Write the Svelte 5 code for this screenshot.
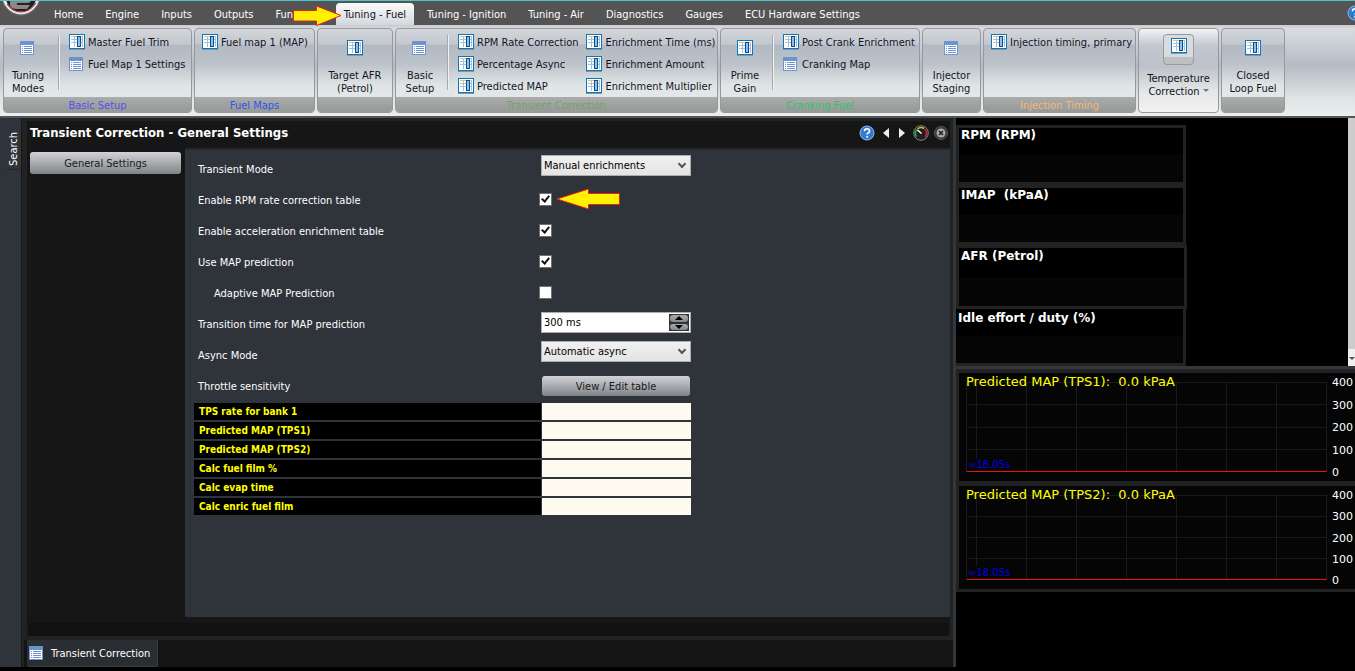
<script lang="ts">
  type Item = { label: string; icon: 'table' | 'list' };
  type Group = {
    title?: string;
    color?: string;
    width: number;
    big?: Item;
    items?: Item[][];
    menu?: boolean;
  };

  const tabs = [
    'Home', 'Engine', 'Inputs', 'Outputs', 'Functions', 'Tuning - Fuel',
    'Tuning - Ignition', 'Tuning - Air', 'Diagnostics', 'Gauges', 'ECU Hardware Settings',
  ];

  const groups: Group[] = [
    {
      title: 'Basic Setup', color: '#5252ee', width: 189,
      big: { label: 'Tuning\nModes', icon: 'list' },
      items: [[{ label: 'Master Fuel Trim', icon: 'table' }, { label: 'Fuel Map 1 Settings', icon: 'list' }]],
    },
    { title: 'Fuel Maps', color: '#2f55ee', width: 121, items: [[{ label: 'Fuel map 1 (MAP)', icon: 'table' }]] },
    { width: 76, big: { label: 'Target AFR\n(Petrol)', icon: 'table' } },
    {
      title: 'Transient Correction', color: '#72a566', width: 323,
      big: { label: 'Basic\nSetup', icon: 'list' },
      items: [
        [
          { label: 'RPM Rate Correction', icon: 'table' },
          { label: 'Percentage Async', icon: 'table' },
          { label: 'Predicted MAP', icon: 'table' },
        ],
        [
          { label: 'Enrichment Time (ms)', icon: 'table' },
          { label: 'Enrichment Amount', icon: 'table' },
          { label: 'Enrichment Multiplier', icon: 'table' },
        ],
      ],
    },
    {
      title: 'Cranking Fuel', color: '#2fc46c', width: 200,
      big: { label: 'Prime\nGain', icon: 'table' },
      items: [[{ label: 'Post Crank Enrichment', icon: 'table' }, { label: 'Cranking Map', icon: 'list' }]],
    },
    { width: 59, big: { label: 'Injector\nStaging', icon: 'list' } },
    {
      title: 'Injection Timing', color: '#f5b877', width: 153,
      items: [[{ label: 'Injection timing, primary', icon: 'table' }]],
    },
    { width: 81, menu: true, big: { label: 'Temperature\nCorrection', icon: 'table' } },
    { width: 64, big: { label: 'Closed\nLoop Fuel', icon: 'table' } },
  ];

  const readouts = [
    'TPS rate for bank 1', 'Predicted MAP (TPS1)', 'Predicted MAP (TPS2)',
    'Calc fuel film %', 'Calc evap time', 'Calc enric fuel film',
  ];

  let active = $state('Tuning - Fuel');
  let mode = $state('Manual enrichments');
  let asyncMode = $state('Automatic async');
  let rpmRate = $state(true);
  let accel = $state(true);
  let mapPrediction = $state(true);
  let adaptive = $state(false);
  let time = $state(300);
</script>

{#snippet icon(kind: string)}
  {#if kind === 'table'}
    <svg class="ico" width="16" height="16" viewBox="0 0 16 16" aria-hidden="true">
      <rect x="0" y="15" width="16" height="1" fill="#8d949c" />
      <rect x="0.5" y="0.5" width="15" height="14" fill="#fff" stroke="#0b78bb" />
      <path d="M2 2.5h12" stroke="#f3bd5d" />
      <path d="M2 5.5h12M2 8.5h12M5.5 3v10M13.5 3v10" stroke="#9cc4e0" />
      <rect x="8.500" y="2.500" width="3" height="10" fill="#8cc0ec" stroke="#0a4f94" />
    </svg>
  {:else}
    <svg class="ico" width="16" height="16" viewBox="0 0 16 16" aria-hidden="true">
      <rect x="0" y="1" width="14" height="14" fill="#6d93cf" />
      <rect x="1" y="5" width="12" height="9" fill="#fff" />
      <path d="M2 6.5h1M2 8.5h1M2 10.5h1M2 12.5h1M4 6.5h8M4 8.5h8M4 10.5h8M4 12.5h8" stroke="#6d93cf" />
    </svg>
  {/if}
{/snippet}

{#snippet help()}
  <svg width="16" height="16" viewBox="0 0 16 16" aria-hidden="true">
    <circle cx="8" cy="8" r="7" fill="#2f7cd0" stroke="#8fbbe8" />
    <path d="M5.500 6.200c0-3.200 5-3.200 5 0 0 1.600-2.400 1.700-2.400 3.300" fill="none" stroke="#fff" stroke-width="1.600" />
    <circle cx="8.100" cy="11.800" r="1" fill="#fff" />
  </svg>
{/snippet}

{#snippet chart(name: string)}
  <section class="chart">
    <div class="plot">
      <i></i><i></i><i></i><i></i>
      <span class="chart-title">{name}:&nbsp; 0.0 kPaA</span>
      <span class="span">≈18.05s</span>
    </div>
    <div class="scale">
      {#each [400, 300, 200, 100, 0] as n}<span>{n}</span>{/each}
    </div>
  </section>
{/snippet}

<div class="app">
  <header class="tabs">
    <svg class="logo" width="43" height="17" viewBox="0 0 43 17" aria-hidden="true">
      <circle cx="21" cy="-5" r="19" fill="#1b1011" stroke="#777" />
      <circle cx="21" cy="-5" r="17" fill="#242021" stroke="#eeeaea" stroke-width="3" />
      <path d="M10 0h21l-2 2H17q-1 2 2 2h11l-3 4H16q-7 0-6-8z" fill="#8d8888" />
      <path d="M7 3q5 8 14 8t15-9" fill="none" stroke="#9a2630" />
    </svg>
    <nav>
      {#each tabs as tab}
        <button class="tab" class:active={tab === active} onclick={() => (active = tab)}>
          {tab}
          {#if tab === 'Tuning - Fuel'}
            <svg class="pointer" width="50" height="22" viewBox="0 0 50 22" aria-hidden="true">
              <path d="M1.500 5.500h23V1L49 10.500 24.500 20.500V16h-23z" fill="#fff200" stroke="#ed1c24" />
            </svg>
          {/if}
        </button>
      {/each}
    </nav>
    <button class="app-help" aria-label="Help">{@render help()}</button>
  </header>

  <div class="ribbon">
    {#each groups as g}
      <section class="group" class:menu={g.menu} style:width="{g.width}px">
        <div class="group-body">
          {#if g.big}
            <button class="big" class:wide={!g.items}>
              <span class="big-icon">{@render icon(g.big.icon)}</span>
              <span class="big-label">{g.big.label}{#if g.menu}<span class="caret"></span>{/if}</span>
            </button>
          {/if}
          {#if g.big && g.items}<span class="sep"></span>{/if}
          {#each g.items ?? [] as col}
            <div class="col">
              {#each col as item}
                <button class="item">{@render icon(item.icon)}{item.label}</button>
              {/each}
            </div>
          {/each}
        </div>
        {#if !g.menu}<div class="caption" style:color={g.color}>{g.title ?? ''}</div>{/if}
      </section>
    {/each}
  </div>

  <div class="workspace">
    <aside class="search"><button>Search</button></aside>

    <main>
      <div class="window">
        <div class="title-bar">
          <h1>Transient Correction - General Settings</h1>
          <div class="tools">
            <button aria-label="Help">{@render help()}</button>
            <button aria-label="Previous">
              <svg width="8" height="12" viewBox="0 0 8 12"><path d="M7 1v10L1 6z" fill="#eee" /></svg>
            </button>
            <button aria-label="Next">
              <svg width="8" height="12" viewBox="0 0 8 12"><path d="M1 1v10l6-5z" fill="#eee" /></svg>
            </button>
            <button aria-label="Gauge">
              <svg width="16" height="16" viewBox="0 0 16 16">
                <circle cx="8" cy="8" r="7.300" fill="#1d2020" stroke="#858585" />
                <path d="M3.500 11.500A5.500 5.500 0 0 1 4 4.500" fill="none" stroke="#18b845" stroke-width="1.500" />
                <path d="M4.500 4A5.500 5.500 0 0 1 11 3.500" fill="none" stroke="#d9c21c" stroke-width="1.500" />
                <path d="M11.500 4A5.500 5.500 0 0 1 12 12" fill="none" stroke="#df2222" stroke-width="1.500" />
                <path d="M8.500 8.500L4.500 5" stroke="#fff" stroke-width="1.500" />
              </svg>
            </button>
            <button aria-label="Close">
              <svg width="16" height="16" viewBox="0 0 16 16">
                <circle cx="8" cy="8" r="6.500" fill="#3a3a3a" stroke="#555" />
                <circle cx="8" cy="8" r="4.500" fill="#aaa" />
                <path d="M6 6l4 4M10 6l-4 4" stroke="#222" stroke-width="1.600" />
              </svg>
            </button>
          </div>
        </div>

        <div class="columns">
          <div class="pages"><button class="glossy">General Settings</button></div>
          <form class="panel" onsubmit={(e) => e.preventDefault()}>
            <div class="row">
              <label for="mode">Transient Mode</label>
              <span class="pick">
                <select id="mode" bind:value={mode}><option>Manual enrichments</option></select>
              </span>
            </div>
            <div class="row">
              <label for="rpm">Enable RPM rate correction table</label>
              <input id="rpm" type="checkbox" bind:checked={rpmRate} />
              <svg class="hint" width="65" height="22" viewBox="0 0 65 22" aria-hidden="true">
                <path d="M1 11L32.500 1v4.500h31v11h-31V21z" fill="#fff200" stroke="#ed1c24" />
              </svg>
            </div>
            <div class="row">
              <label for="accel">Enable acceleration enrichment table</label>
              <input id="accel" type="checkbox" bind:checked={accel} />
            </div>
            <div class="row">
              <label for="pred">Use MAP prediction</label>
              <input id="pred" type="checkbox" bind:checked={mapPrediction} />
            </div>
            <div class="row">
              <label class="sub" for="adaptive">Adaptive MAP Prediction</label>
              <input id="adaptive" type="checkbox" bind:checked={adaptive} />
            </div>
            <div class="row">
              <label for="time">Transition time for MAP prediction</label>
              <div class="spin">
                <input
                  id="time"
                  type="text"
                  value="{time} ms"
                  onchange={(e) => (time = parseInt(e.currentTarget.value) || 0)}
                />
                <div class="steps">
                  <button type="button" aria-label="Increase" onclick={() => (time += 10)}>
                    <svg width="8" height="4" viewBox="0 0 8 4"><path d="M0 4h8L4 0z" /></svg>
                  </button>
                  <button type="button" aria-label="Decrease" onclick={() => (time -= 10)}>
                    <svg width="8" height="4" viewBox="0 0 8 4"><path d="M0 0h8L4 4z" /></svg>
                  </button>
                </div>
              </div>
            </div>
            <div class="row">
              <label for="async">Async Mode</label>
              <span class="pick">
                <select id="async" bind:value={asyncMode}><option>Automatic async</option></select>
              </span>
            </div>
            <div class="row">
              <label for="throttle">Throttle sensitivity</label>
              <button id="throttle" type="button" class="glossy edit">View / Edit table</button>
            </div>
            <table>
              <tbody>
                {#each readouts as r}
                  <tr><th scope="row">{r}</th><td></td></tr>
                {/each}
              </tbody>
            </table>
          </form>
        </div>
        <div class="window-foot"></div>
      </div>
      <div class="dock"><button>{@render icon('list')}Transient Correction</button></div>
    </main>

    <aside class="side">
      <div class="gauges">
        <div class="gauge-list">
          <section class="gauge">RPM (RPM)</section>
          <section class="gauge">IMAP&nbsp; (kPaA)</section>
          <section class="gauge tall">AFR (Petrol)</section>
          <section class="gauge flush">Idle effort / duty (%)</section>
        </div>
        <div class="scrollbar"><span></span></div>
      </div>
      <div class="charts">
        {@render chart('Predicted MAP (TPS1)')}
        {@render chart('Predicted MAP (TPS2)')}
      </div>
    </aside>
  </div>
</div>

<style>
  :global(body) {
    margin: 0;
    background: #000;
  }
  .app {
    --ui: 'DejaVu Sans Condensed', 'DejaVu Sans', sans-serif;
    --wide: 'DejaVu Sans', sans-serif;
    --edge: #222;
    --slate: #2f333a;
    display: flex;
    flex-direction: column;
    min-height: 100vh;
    box-sizing: border-box;
    padding-bottom: 4px;
    overflow: hidden;
    font: 11px/13px var(--ui);
    color: #fff;
  }
  button {
    border: 0;
    padding: 0;
    background: none;
    font: inherit;
    color: inherit;
  }
  svg {
    display: block;
    flex: none;
  }

  .tabs {
    display: flex;
    height: 25px;
    box-sizing: border-box;
    border-top: 1px solid #4fc4c8;
    background: #545454;
  }
  nav {
    display: flex;
    flex: 1;
    align-items: flex-end;
  }
  .tab {
    position: relative;
    height: 22px;
    padding: 1px 11px 0;
    white-space: nowrap;
  }
  .tab.active {
    padding: 1px 8px 0;
    margin: 0 2px;
    border-radius: 4px 4px 0 0;
    background: linear-gradient(#fafbfb, #d3d7dc);
    color: #14141e;
  }
  .pointer {
    position: absolute;
    right: calc(100% - 6px);
    top: 2px;
  }
  .app-help {
    margin-right: -8px;
    width: 16px;
    height: 24px;
  }

  .ribbon {
    display: flex;
    gap: 2px;
    padding: 3px;
    height: 85px;
    border-bottom: 2px solid #555;
    background: linear-gradient(#c9cacc, #d9dce0 4%, #cdd2d7 18%, #b5bbc3 45%, #dfe5e5 80%, #e9eeee);
    color: #14141e;
  }
  .group {
    display: flex;
    flex-direction: column;
    flex: none;
    box-sizing: border-box;
    border: 1px solid #96999b;
    border-radius: 4px;
    overflow: hidden;
    background: linear-gradient(#d3d6da, #c3c8cf 18%, #b3b9c2 20%, #bcc2c9 42%, #dfe5e5 68%, #e7ebea);
  }
  .group.menu {
    background: linear-gradient(#f2f3f4, #c3c8cf 20%, #bcc1ca 45%, #e5e6e7 75%, #f2f2f3);
  }
  .group-body {
    display: flex;
    flex: 1;
  }
  .big {
    width: 48px;
    display: flex;
    flex-direction: column;
    align-items: center;
    gap: 13px;
    padding-top: 11px;
  }
  .big.wide { width: 100%; }
  .big-label {
    white-space: pre;
    text-align: center;
  }
  .menu .big {
    padding-top: 5px;
    gap: 7px;
  }
  .menu .big-icon {
    box-sizing: border-box;
    width: 31px;
    height: 31px;
    padding: 3px 7px;
    border: 1px solid #989b9e;
    border-radius: 4px;
    background: linear-gradient(#d9dcdf 74%, #bcc0c3 76%);
  }
  .caret {
    display: inline-block;
    margin: 0 0 3px 3px;
    border: 3px solid transparent;
    border-top-color: #777;
    border-bottom: 0;
  }
  .sep {
    width: 1px;
    height: 55px;
    margin: 6px 2px 0 3px;
    border-right: 1px solid #f0f0f0;
    background: #a5a9ad;
  }
  .group:first-child .sep { margin-left: 6px; }
  .col {
    padding: 2px 0 0 7px;
  }
  .col + .col { padding-left: 8px; }
  .item {
    display: flex;
    align-items: center;
    gap: 3px;
    height: 22px;
    white-space: nowrap;
  }
  .caption {
    height: 15px;
    line-height: 17px;
    text-align: center;
    background: linear-gradient(#a9acab, #969998);
  }

  .workspace {
    display: flex;
    flex: 1;
    background: var(--edge);
  }
  .search {
    width: 21px;
    border-right: 1px solid #15171a;
    background: var(--slate);
  }
  .search button {
    writing-mode: vertical-rl;
    transform: rotate(180deg);
    margin: 11px 0 0 7px;
    padding: 3px 0;
    border-top: 1px solid #24272c;
  }
  main {
    display: flex;
    flex: 1;
    flex-direction: column;
    min-width: 0;
    margin-left: 2px;
    border-right: 3px solid #33373d;
  }
  .window {
    display: flex;
    flex: 1;
    flex-direction: column;
    border: 3px solid var(--edge);
    border-width: 3px 3px 4px 3px;
    background: #161616;
  }
  .title-bar {
    display: flex;
    justify-content: space-between;
    align-items: center;
    box-sizing: border-box;
    height: 27px;
    padding: 0 1px 3px 3px;
  }
  h1 {
    margin: 0;
    font-size: 13px;
    line-height: 16px;
  }
  .tools {
    display: flex;
    align-items: center;
    gap: 7px;
  }
  .tools button:last-child { margin-left: -3px; }
  .tools button:nth-child(3) { margin-left: 1px; }
  .columns {
    display: flex;
    flex: 1;
  }
  .pages {
    width: 151px;
    padding: 4px 4px 4px 3px;
  }
  .glossy {
    width: 100%;
    height: 22px;
    border-radius: 3px;
    background: linear-gradient(#d0d2d5, #a9abae 50%, #7f8387);
    color: #1a1a22;
  }
  .panel {
    flex: 1;
    padding: 4px 8px 8px 9px;
    border-top: 2px solid #24272c;
    background: var(--slate);
  }
  .row {
    position: relative;
    display: flex;
    align-items: flex-start;
    height: 31px;
  }
  .row label {
    width: 343px;
    padding: 9px 0 0 4px;
    box-sizing: border-box;
    margin-right: 4px;
  }
  .row label.sub { padding-left: 20px; }
  .pick {
    position: relative;
    width: 150px;
    margin-top: 1px;
  }
  .pick::after {
    content: '';
    position: absolute;
    top: 6px;
    right: 6px;
    width: 4px;
    height: 4px;
    border: solid #555;
    border-width: 0 2px 2px 0;
    transform: rotate(45deg);
    pointer-events: none;
  }
  select {
    display: block;
    appearance: none;
    width: 100%;
    height: 21px;
    padding: 0 2px;
    border: 1px solid #adadad;
    border-radius: 0;
    background: linear-gradient(#f0f0f0, #e4e4e4);
    font: inherit;
    color: #000;
  }
  input[type='checkbox'] {
    appearance: none;
    width: 13px;
    height: 13px;
    margin: 8px 0 0 -2px;
    border: 1px solid #707070;
    background: #fff;
  }
  input[type='checkbox']:checked::before {
    content: '';
    display: block;
    width: 3px;
    height: 6px;
    margin: 0 0 0 3px;
    border: solid #111;
    border-width: 0 2px 2px 0;
    transform: rotate(40deg);
  }
  .hint {
    position: absolute;
    left: 362px;
    top: 3px;
  }
  .spin {
    display: flex;
    box-sizing: border-box;
    width: 150px;
    height: 21px;
    margin-top: 3px;
    padding: 1px;
    border: 1px solid #abadb3;
    background: #fff;
  }
  .spin input {
    flex: 1;
    min-width: 0;
    border: 0;
    padding: 0 1px;
    background: none;
    font: inherit;
    color: #000;
  }
  .steps {
    display: grid;
    gap: 2px;
    width: 18px;
    padding: 1px;
    background: #2f3338;
  }
  .steps button {
    display: grid;
    place-items: center;
    border-radius: 3px;
    background: linear-gradient(#aaa, #888);
  }
  .edit {
    width: 148px;
    height: 20px;
    margin: 5px 0 0 1px;
  }
  table {
    border-collapse: collapse;
    width: 497px;
    margin-top: 1px;
  }
  th,
  td {
    height: 17px;
    padding: 0 5px;
    border-bottom: 2px solid var(--slate);
    background: #000;
    color: #ff0;
    font-size: 10px;
    line-height: 17px;
    text-align: left;
  }
  th { width: 337px; }
  td {
    border-left: 1px solid var(--slate);
    background: #fffaf0;
  }
  .window-foot {
    height: 13px;
    margin: 6px 2px 0;
    background: #111;
  }
  .dock {
    display: flex;
    height: 27px;
    padding-left: 3px;
    background: #141414;
  }
  .dock button {
    display: flex;
    align-items: center;
    gap: 6px;
    padding: 0 7px 0 2px;
    border: solid #3a3e44;
    border-width: 0 1px 1px 0;
    border-radius: 0 0 3px 3px;
    background: #2a2d32;
  }

  .side {
    width: 399px;
    display: flex;
    flex-direction: column;
    background: #000;
  }
  .gauges {
    display: flex;
    justify-content: space-between;
    border-bottom: 3px solid #33373d;
  }
  .gauge-list {
    width: 230px;
    padding-top: 7px;
    font: bold 12px/14px var(--wide);
  }
  .gauge {
    box-sizing: border-box;
    height: 60px;
    padding: 0 2px;
    border: 3px solid var(--edge);
    background: linear-gradient(#000 50%, #050505 50%);
  }
  .gauge.tall {
    height: 64px;
    margin-right: -1px;
    padding-top: 1px;
  }
  .gauge.flush {
    height: 57px;
    padding-top: 2px;
    border-width: 0 3px 3px 0;
  }
  .scrollbar {
    display: flex;
    justify-content: center;
    align-items: flex-end;
    width: 7px;
    padding-bottom: 6px;
    background: linear-gradient(to top, #f0f0f0 17px, #cdcdcd 17px);
  }
  .scrollbar span {
    border: 3px solid transparent;
    border-top-color: #555;
    border-bottom: 0;
  }
  .charts {
    display: flex;
    flex-direction: column;
    gap: 5px;
    padding: 4px 0 3px 3px;
    background: var(--edge);
  }
  .chart {
    display: flex;
    gap: 5px;
    padding: 9px 0 9px 7px;
    background: #050505;
    font-family: var(--wide);
  }
  .plot {
    position: relative;
    display: flex;
    flex: 1;
    flex-direction: column;
    box-sizing: border-box;
    height: 90px;
    border: solid #1c1c1c;
    border-width: 0 1px;
    border-bottom: 1px solid #f01010;
    background: repeating-linear-gradient(to right, transparent 0 9px, #1a1a1a 9px 10px, transparent 10px 50px);
  }
  .chart:last-child .plot { height: 85px; }
  .plot i {
    flex: 1;
    border-top: 1px solid #1a1a1a;
  }
  .chart-title {
    position: absolute;
    top: -8px;
    left: -1px;
    font-size: 13px;
    line-height: 16px;
    color: #ff0;
  }
  .span {
    position: absolute;
    left: 1px;
    bottom: 0;
    font-size: 10px;
    color: #0000e6;
    background: #050505;
  }
  .scale {
    display: flex;
    flex-direction: column;
    justify-content: space-between;
    width: 23px;
    margin: -6px 0 -7px;
  }
</style>
